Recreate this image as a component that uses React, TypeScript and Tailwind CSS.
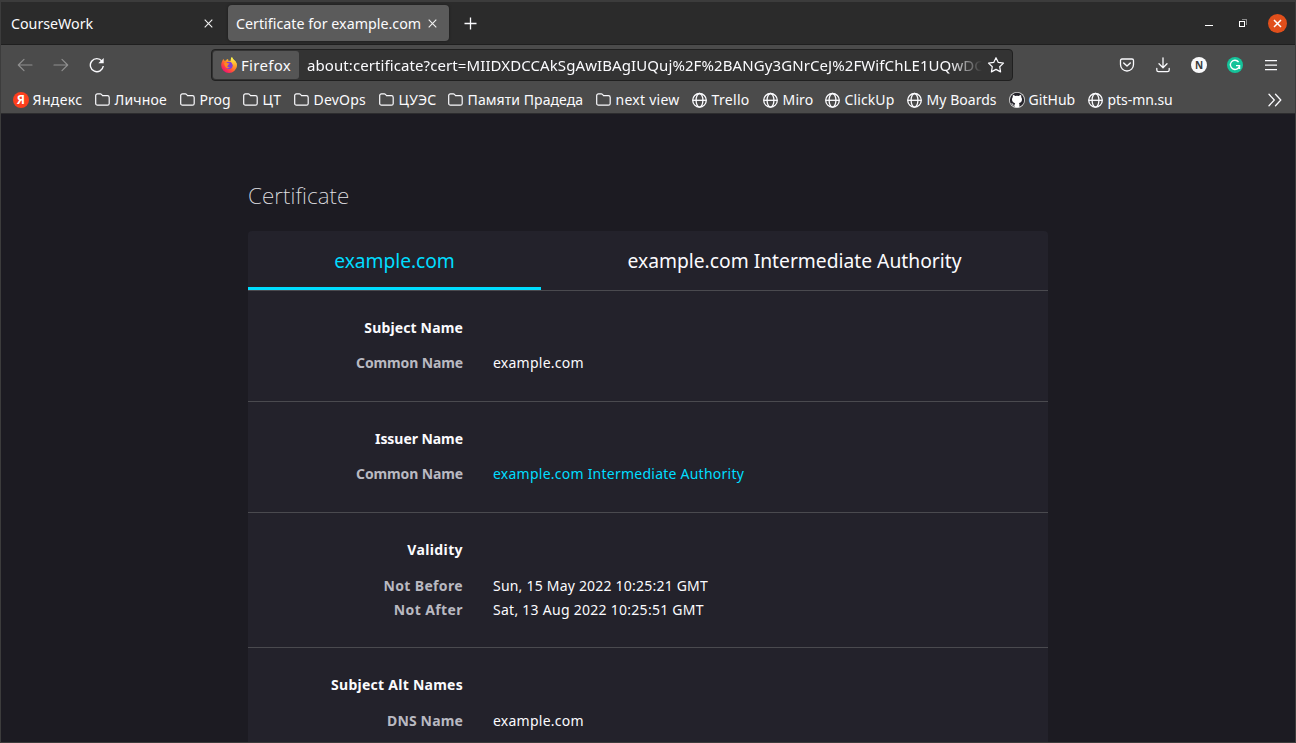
import type { ReactNode } from "react";

function Folder() {
  return (
    <svg width="16" height="16" viewBox="0 0 16 16" fill="none" stroke="#fbfbfe" strokeWidth="1.2" className="shrink-0">
      <path d="M.7 3.6c0-1 .7-1.8 1.8-1.8h2.7c.6 0 1 .2 1.4.7l.9 1.100h4.9c1 0 1.800.8 1.800 1.800v6c0 1-.8 1.800-1.800 1.800H2.500c-1 0-1.800-.8-1.800-1.800z" />
    </svg>
  );
}

function Globe() {
  return (
    <svg width="16" height="16" viewBox="0 0 16 16" fill="none" stroke="#fbfbfe" strokeWidth="1.3" className="shrink-0">
      <circle cx="7.5" cy="8.3" r="6.8" />
      <ellipse cx="7.5" cy="8.3" rx="3.4" ry="6.8" />
      <path d="M.7 8.3h13.6" />
    </svg>
  );
}

function GitHub() {
  return (
    <svg width="16" height="16" viewBox="0 0 16 16" className="shrink-0">
      <circle cx="8" cy="8" r="8" fill="#d8d8d8" />
      <circle cx="8" cy="8" r="7.2" fill="#24232a" />
      <path
        fill="#fff"
        d="M4 3.1c.9 0 1.700.4 2.200.8a8 8 0 0 1 3.600 0c.5-.4 1.300-.8 2.200-.8.4.9.3 1.500.1 2 .6.7.9 1.400.9 2.400 0 2.500-1.500 3.200-3.100 3.400.4.4.5.9.5 1.500v2.700c-.7.3-1.500.4-2.400.4s-1.700-.1-2.400-.4v-1.600c-1.800.3-2.200-.9-2.600-1.400-.2-.3-.5-.5-.8-.7.9-.2 1.400.4 1.700.9.400.7 1 .8 1.700.6 0-.8.2-1.200.6-1.600C4.600 10.700 3 10 3 7.500c0-1 .3-1.700.9-2.400-.2-.5-.3-1.100.1-2z"
      />
    </svg>
  );
}

function Yandex() {
  return (
    <span className="flex size-4 shrink-0 items-center justify-center rounded-full bg-[#fc3f1d] text-[12px] leading-none font-bold text-white">
      Я
    </span>
  );
}

function Firefox() {
  return (
    <svg width="16" height="16" viewBox="0 0 16 16" className="shrink-0">
      <defs>
        <linearGradient id="fx" x1="0.85" y1="0.1" x2="0.2" y2="0.9">
          <stop offset="0.1" stopColor="#fff44f" />
          <stop offset="0.4" stopColor="#ff9a1f" />
          <stop offset="0.7" stopColor="#ff4a3d" />
          <stop offset="1" stopColor="#f01470" />
        </linearGradient>
        <linearGradient id="fy" x1="0.5" y1="0" x2="0.5" y2="1">
          <stop offset="0.1" stopColor="#fff04a" />
          <stop offset="0.6" stopColor="#ffa62b" />
          <stop offset="1" stopColor="#ff3c50" stopOpacity="0" />
        </linearGradient>
      </defs>
      <path fill="url(#fx)" d="M1.400 3.800c.2-.9.700-1.500 1.100-1.900l.9 1.900 1.500-.4C5.500 2.400 6.300 2 7 1.900l.6 2.200L10 3.500C9.600 2 10.200.7 11 0c.3 1.800 2 2.900 3.100 4.100 1.100 1.300 1.700 2.600 1.700 4.300A7.800 7.600 0 0 1 8 16 7.800 7.600 0 0 1 .2 8.400c0-1.800.5-3.300 1.200-4.600z" />
      <circle cx="8.100" cy="8.300" r="3.600" fill="#8040d8" />
      <path fill="#ff8a20" d="M3.200 6.100c1-.7 2.100-.6 2.900 0l2.400.3c-.1.900-1.300 1.100-1.700 1.500.1.700 0 1.200-.6 1.500.6.900 1.700 1 2.700.6-.7 1.300-2.500 1.500-3.700.7C3.900 9.800 3.300 8.300 3.200 6.100z" />
      <path fill="url(#fy)" d="M10 3.500C9.600 2 10.200.7 11 0c.3 1.800 2 2.900 3.100 4.100 1.100 1.300 1.700 2.600 1.700 4.300 0 2-1 4.200-2.500 5.500.6-2 .3-4-.6-5.300C11.800 7.200 10.500 6.500 10 3.500z" />
    </svg>
  );
}

function Close() {
  return (
    <svg width="9" height="9" viewBox="0 0 9 9" stroke="#f2f2f2" strokeWidth="1.100" className="shrink-0">
      <path d="M.7.7l7.600 7.600M8.300.7L.7 8.300" />
    </svg>
  );
}

function Arrow({ flip = false }: { flip?: boolean }) {
  return (
    <svg width="16" height="16" viewBox="0 0 16 16" fill="none" stroke="#8f8f8f" strokeWidth="1.200" strokeLinecap="round" strokeLinejoin="round" className={flip ? "shrink-0 -scale-x-100" : "shrink-0"}>
      <path d="M15 8H1.400M7 2.400L1.300 8 7 13.600" />
    </svg>
  );
}

function TitleBar() {
  return (
    <div className="flex h-[42px] shrink-0 items-start bg-[#2b2b2b] pt-[3px] text-[14.250px]">
      <div className="flex h-9 w-[227px] items-center pl-[10px]">
        <span className="w-[192.500px] pt-0.5 tracking-[-0.01px]">CourseWork</span>
        <Close />
      </div>
      <div className="flex h-9 w-[221px] items-center rounded bg-[#5b5b5b] pl-2 shadow-[0_0_3px_rgba(0,0,0,0.4)]">
        <span className="w-[192px] pt-0.5 tracking-[0.01px] whitespace-nowrap">Certificate for example.com</span>
        <Close />
      </div>
      <div className="flex h-9 grow items-center pl-[15px]">
        <svg width="13" height="13" viewBox="0 0 13 13" stroke="#fbfbfe" strokeWidth="1.300">
          <path d="M6.500.5v12M.5 6.500h12" />
        </svg>
      </div>
      <div className="flex h-9 items-center pr-2">
        <svg width="8" height="8" viewBox="0 0 8 8" fill="#fff" shapeRendering="crispEdges">
          <path d="M0 6h8v1H0z" />
        </svg>
        <svg width="8" height="8" viewBox="0 0 8 8" fill="none" shapeRendering="crispEdges" className="ml-[26px]">
          <path d="M2.500.5h5v5" stroke="#8c8c8c" />
          <path d="M.5 2.500h5v5h-5z" stroke="#fff" />
        </svg>
        <span className="ml-[21px] flex size-[19px] items-center justify-center rounded-full bg-[#e14f1b]">
          <svg width="9" height="9" viewBox="0 0 9 9" stroke="#fff" strokeWidth="1.500">
            <path d="M1 1l7 7M8 1L1 8" />
          </svg>
        </span>
      </div>
    </div>
  );
}

function Toolbar() {
  return (
    <div className="flex h-10 shrink-0 items-center pl-4">
      <Arrow />
      <span className="ml-5 flex"><Arrow flip /></span>
      <svg width="16" height="16" viewBox="0 0 16 16" fill="none" stroke="#fbfbfe" strokeWidth="1.400" className="ml-5 shrink-0">
        <path d="M13 4.200A6.500 6.500 0 1 0 14.300 9" />
        <path d="M14.700 1v5.300H9.300z" fill="#fbfbfe" stroke="none" />
      </svg>
      <div className="ml-[106px] flex h-8 w-[802px] shrink-0 items-center rounded border border-[#202020] bg-[#333333] px-px">
        <div className="flex h-7 w-[86px] shrink-0 items-center gap-1 rounded-[3px] bg-[#555555] pl-2">
          <Firefox />
          <span className="text-[15px] tracking-[0.300px]">Firefox</span>
        </div>
        <div className="ml-2 w-[675px] shrink-0 overflow-hidden text-[15px] tracking-[0.090px] whitespace-nowrap [mask-image:linear-gradient(to_left,transparent,black_32px)]">
          about:certificate?cert=MIIDXDCCAkSgAwIBAgIUQuj%2F%2BANGy3GNrCeJ%2FWifChLE1UQwDC
        </div>
        <svg width="18" height="18" viewBox="0 0 18 18" fill="none" stroke="#fbfbfe" strokeWidth="1.200" strokeLinejoin="round" className="ml-[5px]">
          <path d="M9 1.700l2.300 4.700 5.200.7-3.800 3.600.9 5.200L9 13.400l-4.600 2.500.9-5.200L1.500 7.100l5.200-.7z" />
        </svg>
      </div>
      <svg width="16" height="16" viewBox="0 0 16 16" fill="none" stroke="#fbfbfe" strokeWidth="1.300" strokeLinecap="round" strokeLinejoin="round" className="ml-[106px]">
        <path d="M3 2h10c.9 0 1.500.6 1.500 1.500V7.500a6.500 6.500 0 0 1-13 0v-4C1.500 2.600 2.100 2 3 2z" />
        <path d="M4.700 6l3.300 3 3.300-3" strokeWidth="1.400" />
      </svg>
      <svg width="16" height="16" viewBox="0 0 16 16" fill="none" stroke="#fbfbfe" strokeWidth="1.300" strokeLinecap="round" strokeLinejoin="round" className="ml-5">
        <path d="M8 .8v9.700M4 6.800l4 3.900 4-3.900M1.800 11.500v1.400c0 1 .7 1.800 1.700 1.800h9c1 0 1.700-.8 1.700-1.800v-1.400" />
      </svg>
      <span className="ml-5 flex size-4 items-center justify-center rounded-full bg-[#f9f9fa] text-[10px] leading-none font-bold text-[#3a3a3a]">N</span>
      <svg width="16" height="16" viewBox="0 0 16 16" className="ml-5">
        <circle cx="8" cy="8" r="8" fill="#15c39a" />
        <path d="M11.600 5A4.600 4.600 0 1 0 12.400 9.200" fill="none" stroke="#fff" strokeWidth="1.300" />
        <path d="M9 8.700h3.600v3.200" fill="none" stroke="#fff" strokeWidth="1.300" />
      </svg>
      <svg width="12" height="12" viewBox="0 0 12 12" fill="#fbfbfe" className="ml-[22px]">
        <path d="M0 1h12v1.200H0zM0 5.500h12v1.200H0zM0 10h12v1.200H0z" />
      </svg>
    </div>
  );
}

const bookmarks: { label: string; icon: ReactNode; cls: string }[] = [
  { label: "Яндекс", icon: <Yandex />, cls: "w-[82px] tracking-[0.370px]" },
  { label: "Личное", icon: <Folder />, cls: "w-[85px] tracking-[0.150px]" },
  { label: "Prog", icon: <Folder />, cls: "w-[63px] tracking-[0.020px]" },
  { label: "ЦТ", icon: <Folder />, cls: "w-[51px] tracking-[0.420px]" },
  { label: "DevOps", icon: <Folder />, cls: "w-[85px] tracking-[0.180px]" },
  { label: "ЦУЭС", icon: <Folder />, cls: "w-[69px] tracking-[0.200px]" },
  { label: "Памяти Прадеда", icon: <Folder />, cls: "w-[148px] tracking-[0.060px]" },
  { label: "next view", icon: <Folder />, cls: "w-[96px] tracking-[0.250px]" },
  { label: "Trello", icon: <Globe />, cls: "w-[71px] tracking-[0.300px]" },
  { label: "Miro", icon: <Globe />, cls: "w-[62px] tracking-[0.100px]" },
  { label: "ClickUp", icon: <Globe />, cls: "w-[82px] tracking-[0.100px]" },
  { label: "My Boards", icon: <Globe />, cls: "w-[102px] tracking-[0.030px]" },
  { label: "GitHub", icon: <GitHub />, cls: "w-[79px] tracking-[0.020px]" },
  { label: "pts-mn.su", icon: <Globe />, cls: "w-[90px] tracking-[-0.080px]" },
];

function Bookmarks() {
  return (
    <div className="flex h-7 shrink-0 items-center pt-px pl-3 text-[14px]">
      {bookmarks.map((b) => (
        <div key={b.label} className={`flex shrink-0 items-center gap-[3.600px] whitespace-nowrap ${b.cls}`}>
          {b.icon}
          <span>{b.label}</span>
        </div>
      ))}
      <svg width="14" height="14" viewBox="0 0 14 14" fill="none" stroke="#fbfbfe" strokeWidth="1.300" strokeLinecap="round" strokeLinejoin="round" className="mr-[13px] ml-auto">
        <path d="M1 1.300L6.300 7 1 12.700M7.500 1.300L12.800 7l-5.300 5.700" />
      </svg>
    </div>
  );
}

type Entry = { label: string; labelCls: string; value: string; valueCls: string };

function Section({ title, titleCls, gapCls, rows }: { title: string; titleCls: string; gapCls: string; rows: Entry[] }) {
  return (
    <section className={`border-b border-[#4a4a4f] pt-[25px] text-[14px] leading-6 ${gapCls}`}>
      <h2 className={`w-[215px] text-right font-bold text-[#fbfbfe] ${titleCls}`}>{title}</h2>
      <dl>
        {rows.map((r) => (
          <div key={r.label} className="flex gap-[30px]">
            <dt className={`w-[215px] text-right font-bold text-[#b9b9c1] ${r.labelCls}`}>{r.label}</dt>
            <dd className={r.valueCls}>{r.value}</dd>
          </div>
        ))}
      </dl>
    </section>
  );
}

const early = "space-y-[11px] pb-[26px]";
const late = "space-y-3 pb-[25px]";

export default function App() {
  return (
    <div className="flex h-[743px] w-[1296px] flex-col overflow-hidden border border-t-2 border-[#3c3c3c] bg-[#1c1b22] font-['Noto_Sans','Open_Sans',sans-serif] text-[#fbfbfe]">
      <TitleBar />
      <header className="flex h-[70px] shrink-0 flex-col border-y border-t-[#1f1f1f] border-b-[#2c2c2e] bg-[#4b4b4b]">
        <Toolbar />
        <Bookmarks />
      </header>
      <main className="flex min-h-0 grow flex-col overflow-hidden pl-[247px]">
        <h1 className="mt-[66px] h-8 text-[22.500px] leading-8 font-extralight tracking-[0.080px] text-[#e4e4e8]">Certificate</h1>
        <div className="mt-[19px] w-[800px] shrink-0 rounded-t bg-[#23222b]">
          <div className="flex h-[60px] border-b border-[#4a4a4f] text-[19.250px]">
            <div className="flex w-[293px] items-center justify-center border-b-3 border-[#00ddff] pt-[5px] tracking-[-0.080px] text-[#00ddff]">example.com</div>
            <div className="flex grow items-center justify-center pt-px">example.com Intermediate Authority</div>
          </div>
          <Section
            title="Subject Name"
            titleCls="tracking-[0.150px]"
            gapCls={early}
            rows={[{ label: "Common Name", labelCls: "tracking-[-0.120px]", value: "example.com", valueCls: "tracking-[0.240px]" }]}
          />
          <Section
            title="Issuer Name"
            titleCls="tracking-[-0.060px]"
            gapCls={early}
            rows={[{ label: "Common Name", labelCls: "tracking-[-0.120px]", value: "example.com Intermediate Authority", valueCls: "tracking-[0.240px] text-[#00ddff]" }]}
          />
          <Section
            title="Validity"
            titleCls="tracking-[0.380px]"
            gapCls={late}
            rows={[
              { label: "Not Before", labelCls: "tracking-[0.350px]", value: "Sun, 15 May 2022 10:25:21 GMT", valueCls: "tracking-[0.210px]" },
              { label: "Not After", labelCls: "tracking-[0.400px]", value: "Sat, 13 Aug 2022 10:25:51 GMT", valueCls: "tracking-[0.270px]" },
            ]}
          />
          <Section
            title="Subject Alt Names"
            titleCls="tracking-[0.260px]"
            gapCls={late}
            rows={[{ label: "DNS Name", labelCls: "tracking-[0.150px]", value: "example.com", valueCls: "tracking-[0.240px]" }]}
          />
        </div>
      </main>
    </div>
  );
}
